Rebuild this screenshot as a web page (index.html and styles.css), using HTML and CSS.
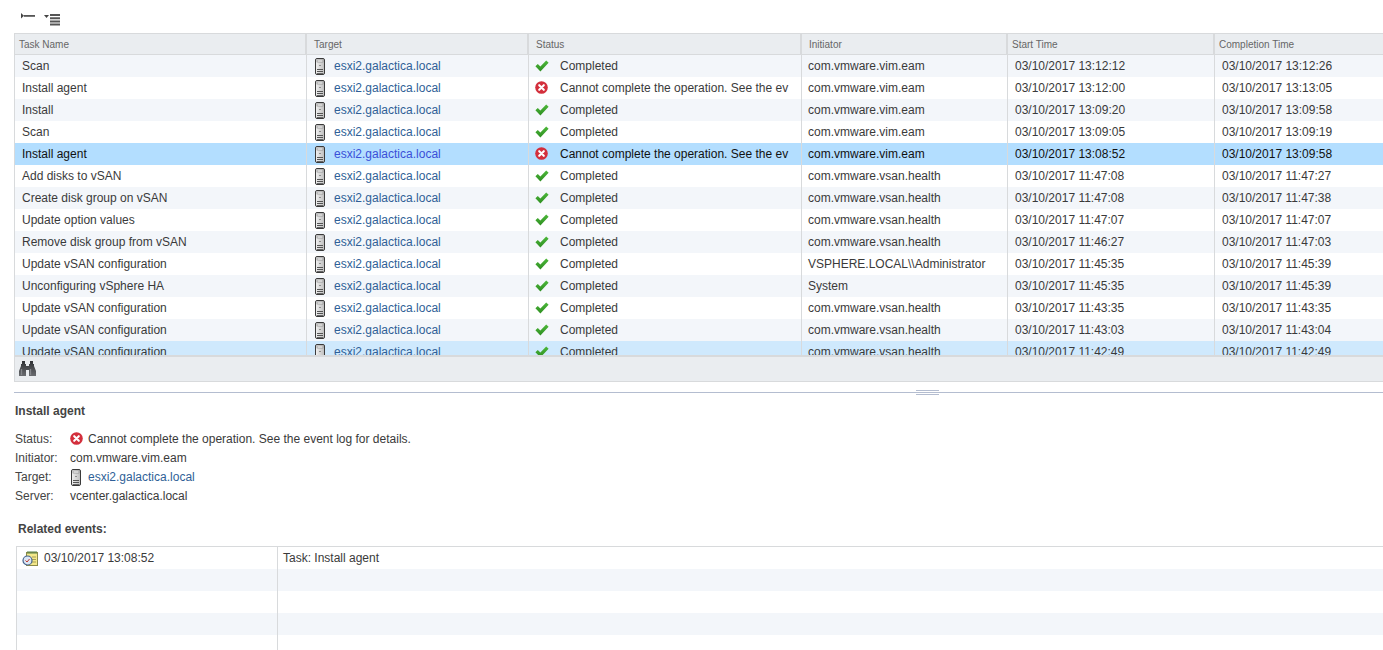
FILE: index.html
```html
<!DOCTYPE html>
<html lang="en">
<head>
<meta charset="utf-8">
<title>Tasks</title>
<link rel="stylesheet" href="styles.css">
</head>
<body>
<svg class="defs" width="0" height="0" aria-hidden="true">
  <defs>
    <linearGradient id="hostfill" x1="0" y1="0" x2="1" y2="0">
      <stop offset="0" stop-color="#f2f2f2"/>
      <stop offset="1" stop-color="#bdbdbd"/>
    </linearGradient>
    <linearGradient id="okfill" x1="0" y1="0" x2="0" y2="1">
      <stop offset="0" stop-color="#4cb83a"/>
      <stop offset="1" stop-color="#2f8f22"/>
    </linearGradient>
    <linearGradient id="binfill" x1="0" y1="0" x2="0" y2="1">
      <stop offset="0" stop-color="#2f3134"/>
      <stop offset="1" stop-color="#6a6c70"/>
    </linearGradient>
  </defs>
  <symbol id="host" viewBox="0 0 10 17">
    <rect x="0.5" y="0.5" width="9" height="16" rx="1.500" fill="url(#hostfill)" stroke="#3a3a3a"/>
    <rect x="2" y="2" width="6" height="2" fill="#fafafa" stroke="#7a7a7a" stroke-width="0.600"/>
    <rect x="4.500" y="7" width="1" height="1" fill="#444"/>
    <rect x="2" y="11" width="6" height="1" fill="#555"/>
    <rect x="2" y="13" width="6" height="1" fill="#555"/>
    <rect x="2" y="15" width="6" height="1" fill="#666"/>
  </symbol>
  <symbol id="ok" viewBox="0 0 14 12">
    <path d="M0.400 6.200 L2.800 4 L5.400 6.600 L11.200 0.600 L13.600 2.800 L5.400 11.400 Z" fill="url(#okfill)"/>
  </symbol>
  <symbol id="err" viewBox="0 0 13 13">
    <circle cx="6.500" cy="6.500" r="6.300" fill="#d32f3c"/>
    <path d="M4.200 4.200 L8.800 8.800 M8.800 4.200 L4.200 8.800" stroke="#fff" stroke-width="2.100" stroke-linecap="round"/>
  </symbol>
</svg>

<div class="toolbar">
  <svg class="tool-a" width="15" height="6" viewBox="0 0 15 6"><path d="M0 0v5.500l3-2.750z" fill="#444"/><rect x="3" y="2" width="11" height="1.800" fill="#555"/></svg>
  <svg class="tool-b" width="17" height="13" viewBox="0 0 17 13"><path d="M0 1h5L2.500 4z" fill="#444"/><path d="M6 1h10M6 4.200h10M6 7.400h10M6 10.600h10" stroke="#555" stroke-width="2"/></svg>
</div>

<section class="grid">
  <div class="row head">
    <div class="cell">Task Name</div><div class="cell">Target</div><div class="cell">Status</div><div class="cell">Initiator</div><div class="cell">Start Time</div><div class="cell">Completion Time</div>
  </div>
  <div class="rows">
    <div class="row alt"><div class="cell">Scan</div><div class="cell"><svg class="host"><use href="#host"/></svg><a>esxi2.galactica.local</a></div><div class="cell"><svg class="ok"><use href="#ok"/></svg>Completed</div><div class="cell">com.vmware.vim.eam</div><div class="cell">03/10/2017 13:12:12</div><div class="cell">03/10/2017 13:12:26</div></div>
    <div class="row"><div class="cell">Install agent</div><div class="cell"><svg class="host"><use href="#host"/></svg><a>esxi2.galactica.local</a></div><div class="cell"><svg class="err"><use href="#err"/></svg>Cannot complete the operation. See the ev</div><div class="cell">com.vmware.vim.eam</div><div class="cell">03/10/2017 13:12:00</div><div class="cell">03/10/2017 13:13:05</div></div>
    <div class="row alt"><div class="cell">Install</div><div class="cell"><svg class="host"><use href="#host"/></svg><a>esxi2.galactica.local</a></div><div class="cell"><svg class="ok"><use href="#ok"/></svg>Completed</div><div class="cell">com.vmware.vim.eam</div><div class="cell">03/10/2017 13:09:20</div><div class="cell">03/10/2017 13:09:58</div></div>
    <div class="row"><div class="cell">Scan</div><div class="cell"><svg class="host"><use href="#host"/></svg><a>esxi2.galactica.local</a></div><div class="cell"><svg class="ok"><use href="#ok"/></svg>Completed</div><div class="cell">com.vmware.vim.eam</div><div class="cell">03/10/2017 13:09:05</div><div class="cell">03/10/2017 13:09:19</div></div>
    <div class="row selected"><div class="cell">Install agent</div><div class="cell"><svg class="host"><use href="#host"/></svg><a>esxi2.galactica.local</a></div><div class="cell"><svg class="err"><use href="#err"/></svg>Cannot complete the operation. See the ev</div><div class="cell">com.vmware.vim.eam</div><div class="cell">03/10/2017 13:08:52</div><div class="cell">03/10/2017 13:09:58</div></div>
    <div class="row"><div class="cell">Add disks to vSAN</div><div class="cell"><svg class="host"><use href="#host"/></svg><a>esxi2.galactica.local</a></div><div class="cell"><svg class="ok"><use href="#ok"/></svg>Completed</div><div class="cell">com.vmware.vsan.health</div><div class="cell">03/10/2017 11:47:08</div><div class="cell">03/10/2017 11:47:27</div></div>
    <div class="row alt"><div class="cell">Create disk group on vSAN</div><div class="cell"><svg class="host"><use href="#host"/></svg><a>esxi2.galactica.local</a></div><div class="cell"><svg class="ok"><use href="#ok"/></svg>Completed</div><div class="cell">com.vmware.vsan.health</div><div class="cell">03/10/2017 11:47:08</div><div class="cell">03/10/2017 11:47:38</div></div>
    <div class="row"><div class="cell">Update option values</div><div class="cell"><svg class="host"><use href="#host"/></svg><a>esxi2.galactica.local</a></div><div class="cell"><svg class="ok"><use href="#ok"/></svg>Completed</div><div class="cell">com.vmware.vsan.health</div><div class="cell">03/10/2017 11:47:07</div><div class="cell">03/10/2017 11:47:07</div></div>
    <div class="row alt"><div class="cell">Remove disk group from vSAN</div><div class="cell"><svg class="host"><use href="#host"/></svg><a>esxi2.galactica.local</a></div><div class="cell"><svg class="ok"><use href="#ok"/></svg>Completed</div><div class="cell">com.vmware.vsan.health</div><div class="cell">03/10/2017 11:46:27</div><div class="cell">03/10/2017 11:47:03</div></div>
    <div class="row"><div class="cell">Update vSAN configuration</div><div class="cell"><svg class="host"><use href="#host"/></svg><a>esxi2.galactica.local</a></div><div class="cell"><svg class="ok"><use href="#ok"/></svg>Completed</div><div class="cell">VSPHERE.LOCAL\\Administrator</div><div class="cell">03/10/2017 11:45:35</div><div class="cell">03/10/2017 11:45:39</div></div>
    <div class="row alt"><div class="cell">Unconfiguring vSphere HA</div><div class="cell"><svg class="host"><use href="#host"/></svg><a>esxi2.galactica.local</a></div><div class="cell"><svg class="ok"><use href="#ok"/></svg>Completed</div><div class="cell">System</div><div class="cell">03/10/2017 11:45:35</div><div class="cell">03/10/2017 11:45:39</div></div>
    <div class="row"><div class="cell">Update vSAN configuration</div><div class="cell"><svg class="host"><use href="#host"/></svg><a>esxi2.galactica.local</a></div><div class="cell"><svg class="ok"><use href="#ok"/></svg>Completed</div><div class="cell">com.vmware.vsan.health</div><div class="cell">03/10/2017 11:43:35</div><div class="cell">03/10/2017 11:43:35</div></div>
    <div class="row alt"><div class="cell">Update vSAN configuration</div><div class="cell"><svg class="host"><use href="#host"/></svg><a>esxi2.galactica.local</a></div><div class="cell"><svg class="ok"><use href="#ok"/></svg>Completed</div><div class="cell">com.vmware.vsan.health</div><div class="cell">03/10/2017 11:43:03</div><div class="cell">03/10/2017 11:43:04</div></div>
    <div class="row hover"><div class="cell">Update vSAN configuration</div><div class="cell"><svg class="host"><use href="#host"/></svg><a>esxi2.galactica.local</a></div><div class="cell"><svg class="ok"><use href="#ok"/></svg>Completed</div><div class="cell">com.vmware.vsan.health</div><div class="cell">03/10/2017 11:42:49</div><div class="cell">03/10/2017 11:42:49</div></div>
  </div>
  <div class="grid-foot">
    <svg width="17" height="15" viewBox="0 0 17 15"><path d="M3 0h3v3h1v2h3V3h1V0h3v3h1v2l2 5v5h-7V9H7v6H0v-5l2-5V3h1z" fill="url(#binfill)"/><path d="M2.500 8v6M11.500 8v6" stroke="#85878b" stroke-width="1.300"/></svg>
  </div>
</section>

<div class="splitter"><span class="grip"></span></div>

<section class="details">
  <h2 class="title">Install agent</h2>
  <dl class="props">
    <dt>Status:</dt><dd><svg class="err"><use href="#err"/></svg><span class="after-err">Cannot complete the operation. See the event log for details.</span></dd>
    <dt>Initiator:</dt><dd>com.vmware.vim.eam</dd>
    <dt>Target:</dt><dd><svg class="host host-detail"><use href="#host"/></svg><a>esxi2.galactica.local</a></dd>
    <dt>Server:</dt><dd>vcenter.galactica.local</dd>
  </dl>
  <h3 class="related">Related events:</h3>
  <div class="events">
    <div class="ev-row">
      <div class="ev-cell">
        <svg class="ev-icon" width="17" height="15" viewBox="0 0 17 15"><rect x="4.500" y="1.500" width="11" height="13" fill="#f4e88a" stroke="#8c8a4a"/><path d="M6 0v3M8 0v3M10 0v3M12 0v3M14 0v3" stroke="#4f7f45"/><path d="M10 6h4M10 8.500h4M10 11h4" stroke="#a89f55"/><circle cx="5.500" cy="9.500" r="4.500" fill="#dbe6f5" stroke="#44638f" stroke-width="1.200"/><path d="M3.500 9.500l1.500 1.500 2.500-3" fill="none" stroke="#c0392b"/></svg>
        03/10/2017 13:08:52
      </div>
      <div class="ev-cell">Task: Install agent</div>
    </div>
    <div class="ev-row alt"><div class="ev-cell"></div><div class="ev-cell"></div></div>
    <div class="ev-row"><div class="ev-cell"></div><div class="ev-cell"></div></div>
    <div class="ev-row alt"><div class="ev-cell"></div><div class="ev-cell"></div></div>
    <div class="ev-row"><div class="ev-cell"></div><div class="ev-cell"></div></div>
  </div>
</section>
</body>
</html>
```
FILE: styles.css
```css
html, body {
  margin: 0;
  padding: 0;
  height: 650px;
  overflow: hidden;
  background: #fff;
}
body {
  width: 1383px;
  font-family: "Liberation Sans", Arial, sans-serif;
  font-size: 12px;
  color: #3a3a3a;
}
.defs { position: absolute; }
a { color: #2f5f97; }

.toolbar {
  height: 33px;
  box-sizing: border-box;
  padding: 13px 0 0 21px;
  display: flex;
  align-items: flex-start;
}
.tool-a { margin-top: 0; }
.tool-b { margin-left: 8px; margin-top: 1px; }

.grid {
  margin-left: 14px;
  width: 1369px;
  height: 349px;
  box-sizing: border-box;
  border: 1px solid #d8dadc;
  border-right: 0;
  display: flex;
  flex-direction: column;
}
.row {
  display: grid;
  grid-template-columns: 292px 222px 273px 206px 207px 1fr;
  height: 22px;
  line-height: 21px;
  flex: none;
}
.cell {
  display: flex;
  align-items: center;
  padding-left: 7px;
  border-right: 1px solid #d8dadc;
  white-space: nowrap;
  overflow: hidden;
  box-sizing: border-box;
}
.cell:last-child { border-right: 0; }
.cell:nth-child(2) { padding-left: 8px; }
.cell:nth-child(3) { padding-left: 6px; }
.cell:nth-child(4) { padding-left: 6px; }

.head {
  height: 21px;
  background: #eaedf0;
  border-bottom: 1px solid #d8dadc;
  box-sizing: border-box;
  font-size: 10px;
  color: #666;
}
.head .cell { margin-left: -1px; border-right-width: 2px; }
.head .cell:nth-child(1) { margin-left: 0; padding-left: 4px; }
.head .cell:nth-child(2) { padding-left: 8px; }
.head .cell:nth-child(3) { padding-left: 8px; }
.head .cell:nth-child(4) { padding-left: 8px; }
.head .cell:nth-child(5) { padding-left: 5px; }
.head .cell:nth-child(6) { padding-left: 5px; }

.rows {
  flex: 1;
  min-height: 0;
  overflow: hidden;
}
.alt { background: #f3f6fa; }
.selected { background: #b3deff; color: #111; }
.selected a { color: #3a4fd8; }
.hover { background: #cfe9fd; }

.host { width: 10px; height: 17px; margin-right: 9px; flex: none; }
.ok { width: 14px; height: 12px; margin: 0 11px 1px 0; flex: none; }
.err { width: 13px; height: 13px; margin: 0 12px 2px 0; flex: none; }

.grid-foot {
  height: 26px;
  flex: none;
  box-sizing: border-box;
  background: #eaedf0;
  border-top: 2px solid #d8dadc;
  padding: 4px 0 0 4px;
}
.grid-foot svg { display: block; }

.splitter {
  margin: 10px 0 0 14px;
  height: 1px;
  background: #b4bdd0;
  position: relative;
}
.grip {
  position: absolute;
  left: 902px;
  top: -2px;
  width: 23px;
  height: 3px;
  border-top: 1px solid #b4bdd0;
  border-bottom: 1px solid #b4bdd0;
}

.details { padding: 11px 0 0 15px; }
.title {
  margin: 0;
  font-size: 12px;
  line-height: 14px;
  font-weight: 700;
  color: #444;
}
.props {
  margin: 12px 0 0;
  display: grid;
  grid-template-columns: 55px 1fr;
  grid-auto-rows: 19px;
  line-height: 19px;
}
.props dt { color: #444; }
.props dd {
  margin: 0;
  display: flex;
  align-items: center;
}
.err + .after-err { margin-left: -7px; }
.host-detail { margin: 0 7px 0 1px; }

.related {
  margin: 16px 0 0 3px;
  font-size: 12px;
  line-height: 14px;
  font-weight: 700;
  color: #444;
}
.events {
  margin: 10px 0 0 1px;
  border: 1px solid #d8dadc;
  border-right: 0;
  border-bottom: 0;
  height: 110px;
  overflow: hidden;
}
.ev-row {
  display: grid;
  grid-template-columns: 261px 1fr;
  height: 22px;
}
.ev-cell {
  display: flex;
  align-items: center;
  padding-left: 5px;
  box-sizing: border-box;
  border-right: 1px solid #d8dadc;
}
.ev-cell:last-child { border-right: 0; }
.ev-icon { margin-right: 5px; flex: none; }
```
